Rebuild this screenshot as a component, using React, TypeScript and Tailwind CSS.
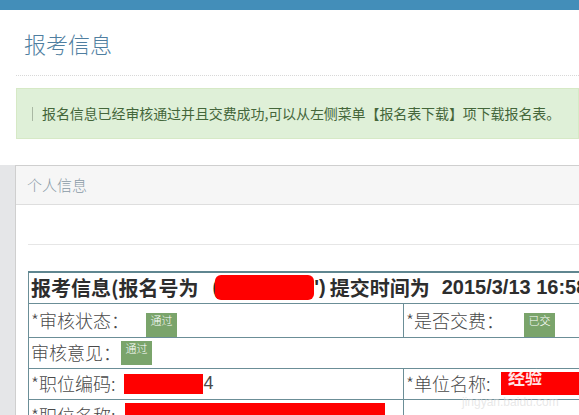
const cjk = "font-['Noto_Sans_CJK_SC','Liberation_Sans',sans-serif]";

const Badge = ({ text }: { text: string }) => (
  <span className="inline-flex h-[24px] w-[31px] items-start justify-center bg-[#7aa46b] pt-[1px] text-[11px] leading-[13px] text-white">
    {text}
  </span>
);

const Redact = ({ className }: { className: string }) => (
  <span className={"inline-block shrink-0 bg-[#ff0000] " + className} />
);

export default function App() {
  return (
    <div className={"relative h-[415px] w-[579px] overflow-hidden bg-white " + cjk}>
      <div className="h-[10px] bg-[#438eb9]" />

      <div className="pl-4">
        <div className="flex h-[66px] items-center border-b border-dotted border-[#d8d8d8] pl-2">
          <h1 className="text-[22px] font-light leading-none text-[#4f7ea0]">报考信息</h1>
        </div>

        <div className="mt-[12px] flex h-[51px] items-center border border-[#d6e9c6] bg-[#dff0d8] pl-[15px]">
          <span className="mr-[9px] h-[14px] w-px shrink-0 bg-[#a9b8a3]" />
          <span className="whitespace-nowrap text-[14px] tracking-[-0.1px] text-[#44663a]">
            报名信息已经审核通过并且交费成功,可以从左侧菜单【报名表下载】项下载报名表。
          </span>
        </div>
      </div>

      <div className="mt-[26px] flex">
        <div className="w-[15px] shrink-0 bg-[#e5e6e8]" />
        <div className="flex-1 border-l border-t border-[#cfcfcf]">
          <div className="flex h-[39px] items-center border-b border-[#dedede] bg-[#f6f6f6] pl-[11px]">
            <span className="text-[15px] font-light text-[#8a9aa6]">个人信息</span>
          </div>
          <div className="pl-[12px]">
            <div className="h-[40px] border-b border-[#e6e6e6]" />
            <div className="h-[26px]" />
            <table className="w-[640px] table-fixed border-collapse border-t-2 border-[#5f8690] text-[18px] text-[#4a4a4a]">
              <colgroup>
                <col className="w-[375px]" />
                <col className="w-[265px]" />
              </colgroup>
              <tbody>
                <tr className="h-[31px]">
                  <td colSpan={2} className="whitespace-nowrap border border-[#6b8e97] pl-[2px] text-[20px] font-bold leading-[29px] text-[#2d2d2d]">
                    <div className="flex items-center">
                      <span>报考信息(报名号为</span>
                      <span className="ml-[14px] font-['Liberation_Sans',sans-serif]">(</span>
                      <Redact className="ml-[-4px] h-[25px] w-[99px] rounded-[6px]" />
                      <span className="font-['Liberation_Sans',sans-serif]">')</span>
                      <span className="ml-[4px]">提交时间为</span>
                      <span className="ml-[12px] font-['Liberation_Sans',sans-serif]">2015/3/13 16:58</span>
                    </div>
                  </td>
                </tr>
                <tr className="h-[31px]">
                  <td className="border border-[#6b8e97] pl-[2px] font-light">
                    <div className="flex items-center">
                      <span>*审核状态：</span>
                      <span className="ml-[17px]">
                        <Badge text="通过" />
                      </span>
                    </div>
                  </td>
                  <td className="border border-[#6b8e97] pl-[2px] font-light">
                    <div className="flex items-center">
                      <span>*是否交费：</span>
                      <span className="ml-[20px]">
                        <Badge text="已交" />
                      </span>
                    </div>
                  </td>
                </tr>
                <tr className="h-[31px]">
                  <td colSpan={2} className="border border-[#6b8e97] pl-[2px] font-light">
                    <div className="flex items-center">
                      <span>审核意见：</span>
                      <Badge text="通过" />
                    </div>
                  </td>
                </tr>
                <tr className="h-[31px]">
                  <td className="border border-[#6b8e97] pl-[2px] font-light">
                    <div className="flex items-center">
                      <span>*职位编码:</span>
                      <Redact className="ml-[9px] h-[20px] w-[79px]" />
                      <span className="font-['Liberation_Sans',sans-serif]">4</span>
                    </div>
                  </td>
                  <td className="border border-[#6b8e97] pl-[2px] font-light">
                    <div className="flex items-center">
                      <span>*单位名称:</span>
                      <Redact className="ml-[11px] h-[23px] w-[90px]" />
                    </div>
                  </td>
                </tr>
                <tr className="h-[31px]">
                  <td className="border border-[#6b8e97] pl-[2px] align-top font-light">
                    <div className="flex items-start pt-[2px]">
                      <span className="whitespace-nowrap">*职位名称:</span>
                      <Redact className="ml-[10px] mt-[1px] h-[24px] w-[260px]" />
                    </div>
                  </td>
                  <td className="border border-[#6b8e97]" />
                </tr>
              </tbody>
            </table>
          </div>
        </div>
      </div>

      <div className="pointer-events-none absolute left-[508px] top-[368px] text-[17px] font-bold leading-none text-white/90">
        经验
      </div>
      <div className="pointer-events-none absolute left-[462px] top-[396px] font-['Liberation_Sans',sans-serif] text-[12px] leading-none text-[#d8d8d8]/60">
        jingyan.baidu.com
      </div>
    </div>
  );
}
